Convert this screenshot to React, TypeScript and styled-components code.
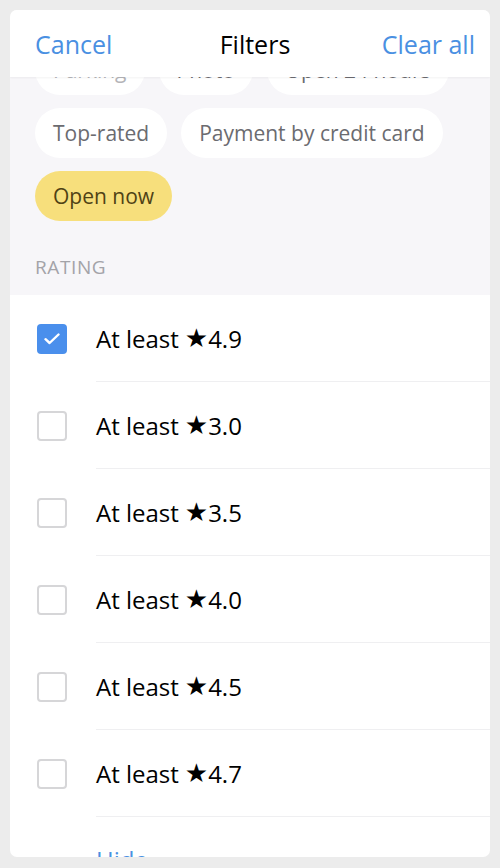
import { useLayoutEffect, useRef } from "react";
import styled, { createGlobalStyle } from "styled-components";

const blue = "#4a90e2";

const GlobalStyle = createGlobalStyle`
	html, body {
		margin: 0;
		padding: 0;
		background: #ececec;
		font-family: "Open Sans", "Noto Sans", sans-serif;
	}
`;

const Page = styled.div`
	padding: 10px;
	height: 848px;
	box-sizing: content-box;
`;

const Sheet = styled.div`
	display: flex;
	flex-direction: column;
	height: 847px;
	border-radius: 7px;
	overflow: hidden;
	background: #fff;
`;

const Header = styled.header`
	flex: none;
	height: 67px;
	display: grid;
	grid-template-columns: 1fr auto 1fr;
	align-items: center;
	padding: 0 15px 0 25px;
	background: #fff;
	box-shadow: 0 1px 2px rgba(0, 0, 0, 0.05);
	position: relative;
	z-index: 1;
`;

const HeaderLink = styled.button<{ $right?: boolean }>`
	border: 0;
	background: none;
	padding: 0;
	font: inherit;
	font-size: 25px;
	color: ${blue};
	justify-self: ${(p) => (p.$right ? "end" : "start")};
	cursor: pointer;
`;

const Title = styled.h1`
	margin: 0;
	font-size: 25px;
	font-weight: 500;
	color: #000;
`;

const Body = styled.div`
	flex: 1;
	overflow: hidden;
`;

const Tags = styled.div`
	background: #f7f6f9;
`;

const Chips = styled.div`
	display: flex;
	flex-wrap: wrap;
	gap: 13px 14px;
	padding: 20px 25px 0;
`;

const Chip = styled.span<{ $active?: boolean; $muted?: boolean }>`
	display: inline-flex;
	align-items: center;
	height: 50px;
	padding: 0 18px;
	border-radius: 25px;
	font-size: 21px;
	font-weight: 500;
	background: ${(p) => (p.$active ? "#f7df7c" : "#fff")};
	color: ${(p) => (p.$active ? "#4f4215" : p.$muted ? "#b4b4b8" : "#6b6b70")};
`;

const SectionLabel = styled.div`
	padding: 34px 25px 16px;
	line-height: 24px;
	font-size: 19px;
	letter-spacing: 0.6px;
	color: #a3a3a8;
	text-transform: uppercase;
`;

const List = styled.ul`
	list-style: none;
	margin: 0;
	padding: 0;
	background: #fff;
`;

const Row = styled.li`
	display: flex;
	align-items: center;
	height: 87px;
`;

const Box = styled.span<{ $checked?: boolean }>`
	flex: none;
	display: flex;
	align-items: center;
	justify-content: center;
	width: 30px;
	height: 30px;
	margin: 0 29px 0 27px;
	box-sizing: border-box;
	border-radius: 4px;
	border: ${(p) => (p.$checked ? "none" : "2px solid #d6d6d8")};
	background: ${(p) => (p.$checked ? "#4a8fec" : "#fff")};
`;

const RowLabel = styled.span`
	flex: 1;
	align-self: stretch;
	display: flex;
	align-items: center;
	font-size: 24px;
	color: #000;
	border-bottom: 1px solid #efeff1;
`;

const Star = styled.span`
	font-family: "DejaVu Sans", sans-serif;
	font-size: 26px;
	margin: 0 0 0 6px;
`;

const Hide = styled.div`
	padding: 26px 0 0 86px;
	font-size: 24px;
	color: ${blue};
`;

const ratings = ["4.9", "3.0", "3.5", "4.0", "4.5", "4.7"];

function Check() {
	return (
		<svg width="16" height="12" viewBox="0 0 16 12" fill="none">
			<path d="M1.5 6.2 5.6 10 14.5 1.5" stroke="#fff" strokeWidth="2.4" strokeLinecap="round" strokeLinejoin="round" />
		</svg>
	);
}

export default function App() {
	const body = useRef<HTMLDivElement>(null);

	useLayoutEffect(() => {
		if (body.current) body.current.scrollTop = 52;
	}, []);

	return (
		<Page>
			<GlobalStyle />
			<Sheet>
				<Header>
					<HeaderLink>Cancel</HeaderLink>
					<Title>Filters</Title>
					<HeaderLink $right>Clear all</HeaderLink>
				</Header>
				<Body ref={body}>
					<Tags>
						<Chips>
							<Chip $muted>Parking</Chip>
							<Chip>Photo</Chip>
							<Chip>Open 24 hours</Chip>
							<Chip>Top-rated</Chip>
							<Chip>Payment by credit card</Chip>
							<Chip $active>Open now</Chip>
						</Chips>
						<SectionLabel>Rating</SectionLabel>
					</Tags>
					<List>
						{ratings.map((r, i) => (
							<Row key={r}>
								<Box $checked={i === 0}>{i === 0 && <Check />}</Box>
								<RowLabel>
									At least<Star>★</Star>
									{r}
								</RowLabel>
							</Row>
						))}
					</List>
					<Hide>Hide</Hide>
				</Body>
			</Sheet>
		</Page>
	);
}
